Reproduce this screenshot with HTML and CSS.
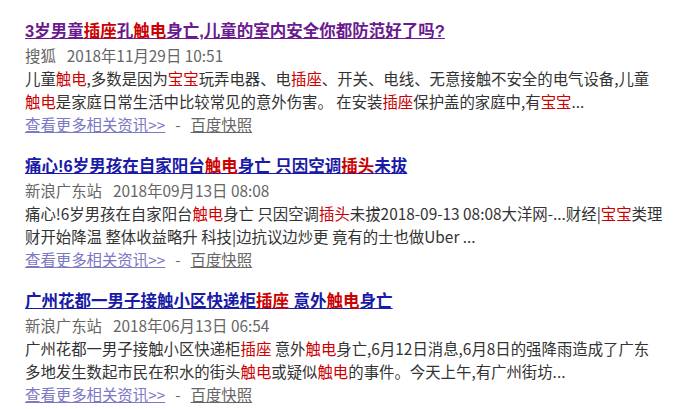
FILE: index.html
```html
<!DOCTYPE html>
<html lang="zh-CN">
<head>
<meta charset="utf-8">
<link rel="stylesheet" href="styles.css">
</head>
<body>
<div class="list">
  <div class="result">
    <div class="title"><a class="visited" href="#">3岁男童<em>插座</em>孔<em>触电</em>身亡,儿童的室内安全你都防范好了吗?</a></div>
    <div class="meta"><span class="src">搜狐</span><span>2018年11月29日 10:51</span></div>
    <div class="desc">儿童<em>触电</em>,多数是因为<em>宝宝</em>玩弄电器、电<em>插座</em>、开关、电线、无意接触不安全的电气设备,儿童</div>
    <div class="desc"><em>触电</em>是家庭日常生活中比较常见的意外伤害。 在安装<em>插座</em>保护盖的家庭中,有<em>宝宝</em>...</div>
    <div class="links"><a class="more" href="#">查看更多相关资讯&gt;&gt;</a><span class="dash">-</span><a class="snap" href="#">百度快照</a></div>
  </div>
  <div class="result">
    <div class="title"><a href="#">痛心!6岁男孩在自家阳台<em>触电</em>身亡 只因空调<em>插头</em>未拔</a></div>
    <div class="meta"><span class="src">新浪广东站</span><span>2018年09月13日 08:08</span></div>
    <div class="desc">痛心!6岁男孩在自家阳台<em>触电</em>身亡 只因空调<em>插头</em>未拔2018-09-13 08:08大洋网-...财经|<em>宝宝</em>类理</div>
    <div class="desc">财开始降温 整体收益略升 科技|边抗议边炒更 竟有的士也做Uber ...</div>
    <div class="links"><a class="more" href="#">查看更多相关资讯&gt;&gt;</a><span class="dash">-</span><a class="snap" href="#">百度快照</a></div>
  </div>
  <div class="result">
    <div class="title"><a href="#">广州花都一男子接触小区快递柜<em>插座</em> 意外<em>触电</em>身亡</a></div>
    <div class="meta"><span class="src">新浪广东站</span><span>2018年06月13日 06:54</span></div>
    <div class="desc">广州花都一男子接触小区快递柜<em>插座</em> 意外<em>触电</em>身亡,6月12日消息,6月8日的强降雨造成了广东</div>
    <div class="desc">多地发生数起市民在积水的街头<em>触电</em>或疑似<em>触电</em>的事件。今天上午,有广州街坊...</div>
    <div class="links"><a class="more" href="#">查看更多相关资讯&gt;&gt;</a><span class="dash">-</span><a class="snap" href="#">百度快照</a></div>
  </div>
</div>
</body>
</html>
```
FILE: styles.css
```css
html, body {
  margin: 0;
  padding: 0;
  background: #ffffff;
}
body {
  font-family: "Noto Sans CJK SC", "Liberation Sans", sans-serif;
  font-size: 15.4px;
  color: #333333;
}
em {
  font-style: normal;
  color: #cc0000;
}
.list {
  padding: 19px 0 0 25px;
  display: flex;
  flex-direction: column;
  gap: 18px;
}
.result {
  display: flex;
  flex-direction: column;
  white-space: nowrap;
}
.title {
  line-height: 24px;
  font-size: 16.5px;
  font-weight: bold;
  font-family: "Liberation Sans", "Noto Sans CJK SC", sans-serif;
}
.title a {
  color: #1a1aa8;
  text-decoration: underline;
}
.title a.visited {
  color: #6a1a8e;
}
.meta {
  line-height: 24px;
  color: #666666;
}
.meta .src {
  margin-right: 11px;
}
.desc {
  line-height: 23px;
  color: #333333;
}
.links {
  line-height: 23px;
  color: #666666;
}
.links .more {
  color: #7b78c4;
  text-decoration: underline;
}
.links .dash {
  margin: 0 10px;
}
.links .snap {
  color: #666666;
  text-decoration: underline;
}
```
